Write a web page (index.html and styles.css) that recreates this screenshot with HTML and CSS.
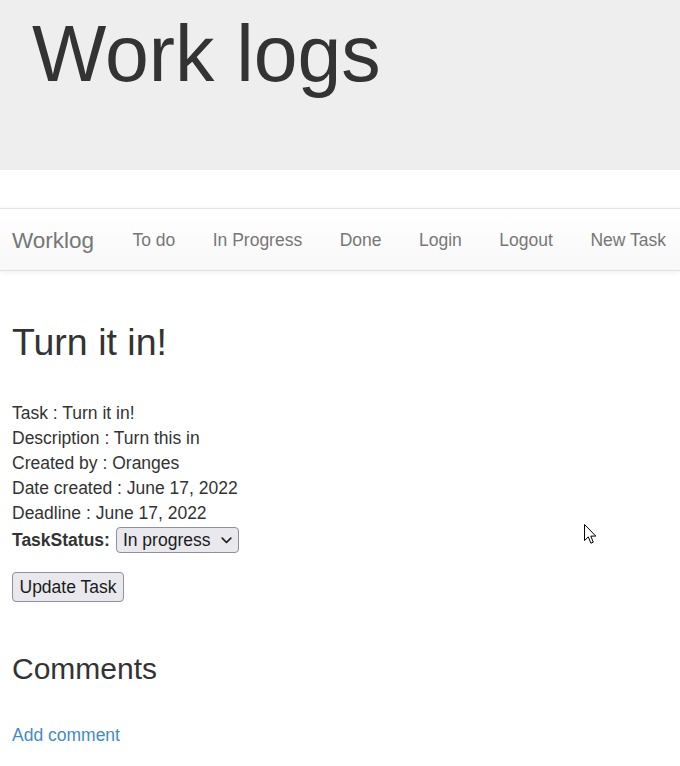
FILE: index.html
```html
<!DOCTYPE html>
<html lang="en">
<head>
<meta charset="utf-8">
<title>Work logs</title>
<link rel="stylesheet" href="styles.css">
</head>
<body>
  <header class="jumbotron">
    <h1 class="jumbo-title">Work logs</h1>
  </header>

  <nav class="navbar">
    <a class="brand" href="#">Worklog</a>
    <ul class="nav-links">
      <li><a href="#">To do</a></li>
      <li><a href="#">In Progress</a></li>
      <li><a href="#">Done</a></li>
      <li><a href="#">Login</a></li>
      <li><a href="#">Logout</a></li>
      <li><a href="#">New Task</a></li>
    </ul>
  </nav>

  <main class="content">
    <h2 class="task-title">Turn it in!</h2>
    <div class="details">
      <div class="line">Task : Turn it in!</div>
      <div class="line">Description : Turn this in</div>
      <div class="line">Created by : Oranges</div>
      <div class="line">Date created : June 17, 2022</div>
      <div class="line">Deadline : June 17, 2022</div>
    </div>
    <form class="status-form">
      <div class="status-row">
        <label class="status-label" for="status">TaskStatus:</label>
        <div class="select-wrap">
          <select id="status" class="status-select">
            <option>To do</option>
            <option selected>In progress</option>
            <option>Done</option>
          </select>
          <svg class="chev" width="11" height="7" viewBox="0 0 11 7"><path d="M1.2 1.2 L5.5 5.5 L9.8 1.2" fill="none" stroke="#222" stroke-width="1.7" stroke-linecap="round" stroke-linejoin="round"/></svg>
        </div>
      </div>
      <button type="button" class="btn">Update Task</button>
    </form>
    <h3 class="comments-title">Comments</h3>
    <a class="add-link" href="#">Add comment</a>
  </main>

  <svg class="cursor" width="13" height="21" viewBox="0 0 13 21">
    <path d="M0.5 0.5 L0.5 16.5 L4.3 12.9 L6.9 19.2 L9.3 18.2 L6.8 12.1 L11.8 12.1 Z" fill="#fff" stroke="#000" stroke-width="1" stroke-linejoin="miter"/>
  </svg>
</body>
</html>
```

FILE: styles.css
```css
* { box-sizing: border-box; }

html, body {
  margin: 0;
  padding: 0;
  background: #fff;
}

body {
  font-family: "Liberation Sans", Arial, Helvetica, sans-serif;
  font-size: 17.5px;
  line-height: 25px;
  color: #333;
  position: relative;
  min-height: 766px;
  overflow: hidden;
}

.jumbotron {
  background: #eeeeee;
  height: 170px;
  padding: 11px 32px 0;
  margin: 0 0 38px;
}

.jumbo-title {
  margin: 0;
  font-size: 78.75px;
  line-height: 1.1;
  font-weight: 500;
  color: #333;
}

.navbar {
  display: flex;
  align-items: center;
  height: 63px;
  padding: 2px 0 0 12px;
  border-top: 1px solid #e4e4e4;
  border-bottom: 1px solid #e0e0e0;
  background: linear-gradient(to bottom, #ffffff 0%, #f8f8f8 100%);
  box-shadow: 0 1px 5px rgba(0, 0, 0, 0.075);
  overflow: hidden;
  white-space: nowrap;
}

.brand {
  flex-shrink: 0;
  font-size: 22.5px;
  line-height: 25px;
  color: #777;
  text-decoration: none;
  margin-right: 19.5px;
}

.nav-links {
  display: flex;
  flex-shrink: 0;
  list-style: none;
  margin: 0;
  padding: 0;
}

.nav-links li {
  flex-shrink: 0;
}

.nav-links a {
  display: block;
  padding: 0 18.75px;
  line-height: 25px;
  color: #777;
  text-decoration: none;
  white-space: nowrap;
}

.content {
  padding: 0 12px;
}

.task-title {
  margin: 51px 0 0;
  font-size: 37.5px;
  line-height: 1.1;
  font-weight: 500;
  color: #333;
}

.details {
  margin-top: 38px;
}

.line {
  height: 25px;
  white-space: nowrap;
}

.status-form {
  margin: 0;
}

.status-row {
  display: flex;
  align-items: center;
  height: 26px;
  margin-top: 1px;
}

.status-label {
  font-weight: bold;
  margin-right: 6px;
}

.select-wrap {
  position: relative;
  width: 123px;
  height: 26px;
}

.status-select {
  appearance: none;
  -webkit-appearance: none;
  width: 123px;
  height: 26px;
  margin: 0;
  padding: 0 0 0 6px;
  font-family: inherit;
  font-size: 17.5px;
  line-height: 24px;
  color: #1b1b1b;
  background: #e9e9ed;
  border: 1px solid #8f8f9d;
  border-radius: 4px;
}

.chev {
  position: absolute;
  right: 7px;
  top: 10px;
  pointer-events: none;
}

.btn {
  display: block;
  margin-top: 19px;
  height: 30px;
  padding: 0 6.5px;
  font-family: inherit;
  font-size: 17.5px;
  line-height: 28px;
  color: #1b1b1b;
  background: #e9e9ed;
  border: 1px solid #8f8f9d;
  border-radius: 4px;
}

.comments-title {
  margin: 50px 0 0;
  font-size: 30px;
  line-height: 33px;
  font-weight: 500;
  color: #333;
}

.add-link {
  display: inline-block;
  margin-top: 38px;
  color: #428bca;
  text-decoration: none;
}

.cursor {
  position: absolute;
  left: 584px;
  top: 524px;
}
```
